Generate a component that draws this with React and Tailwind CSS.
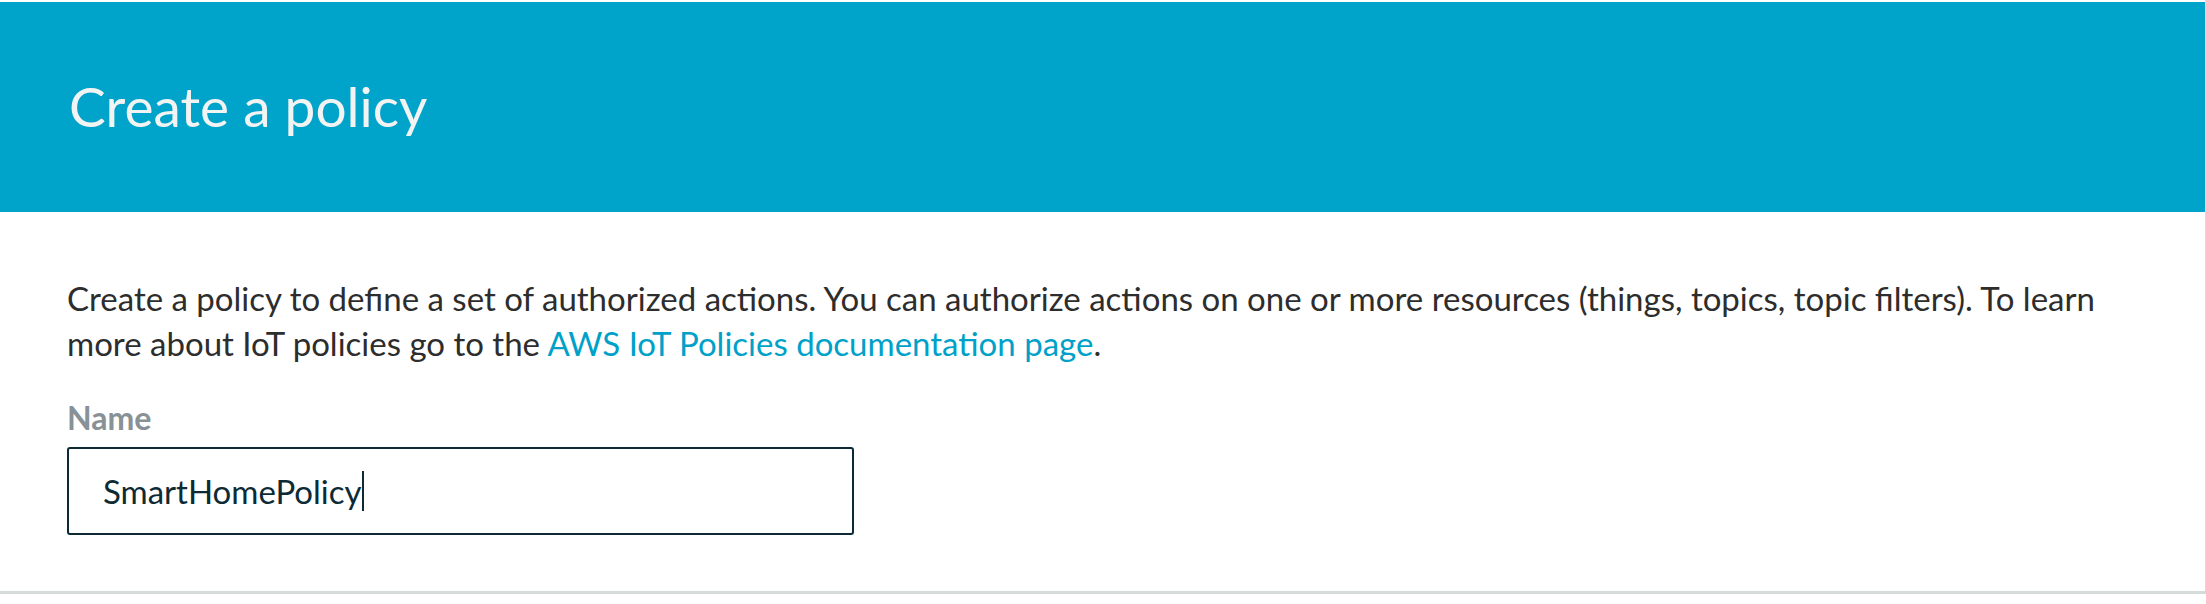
import React from "react";

export default function App() {
  return (
    <div
      className="w-[2206px] h-[604px] bg-white"
      style={{ fontFamily: "Lato, 'Open Sans', sans-serif" }}
    >
      <div className="w-[2206px] pt-[2px] border-b-[3px] border-r border-[#d5dbdb] border-t-0 border-l-0">
        <div className="h-[210px] w-[2205px] bg-[#00a3ca] pl-[69px] pt-[71px]">
          <h1 className="text-[55px] leading-[66px] font-normal text-[#f2f3f3]">
            Create a policy
          </h1>
        </div>
        <div className="pl-[67px] pt-[64px] pb-[56px]">
          <p className="text-[33px] leading-[45px] text-[#2d2d2d]">
            Create a policy to define a set of authorized actions. You can
            authorize actions on one or more resources (things, topics, topic
            filters). To learn
            <br />
            more about IoT policies go to the{" "}
            <a className="text-[#00a1c9]">AWS IoT Policies documentation page</a>
            .
          </p>
          <div className="mt-[32px] text-[32px] leading-[40px] font-bold text-[#879196]">
            Name
          </div>
          <div className="mt-[9px] w-[787px] h-[88px] border-2 border-[#0b2a33] rounded-[3px] pl-[34px] flex items-center">
            <span className="text-[33px] leading-[40px] text-[#0d2a35]">
              SmartHomePolicy
            </span>
            <span className="w-[2px] h-[40px] bg-[#0d2a35]" />
          </div>
        </div>
      </div>
    </div>
  );
}
